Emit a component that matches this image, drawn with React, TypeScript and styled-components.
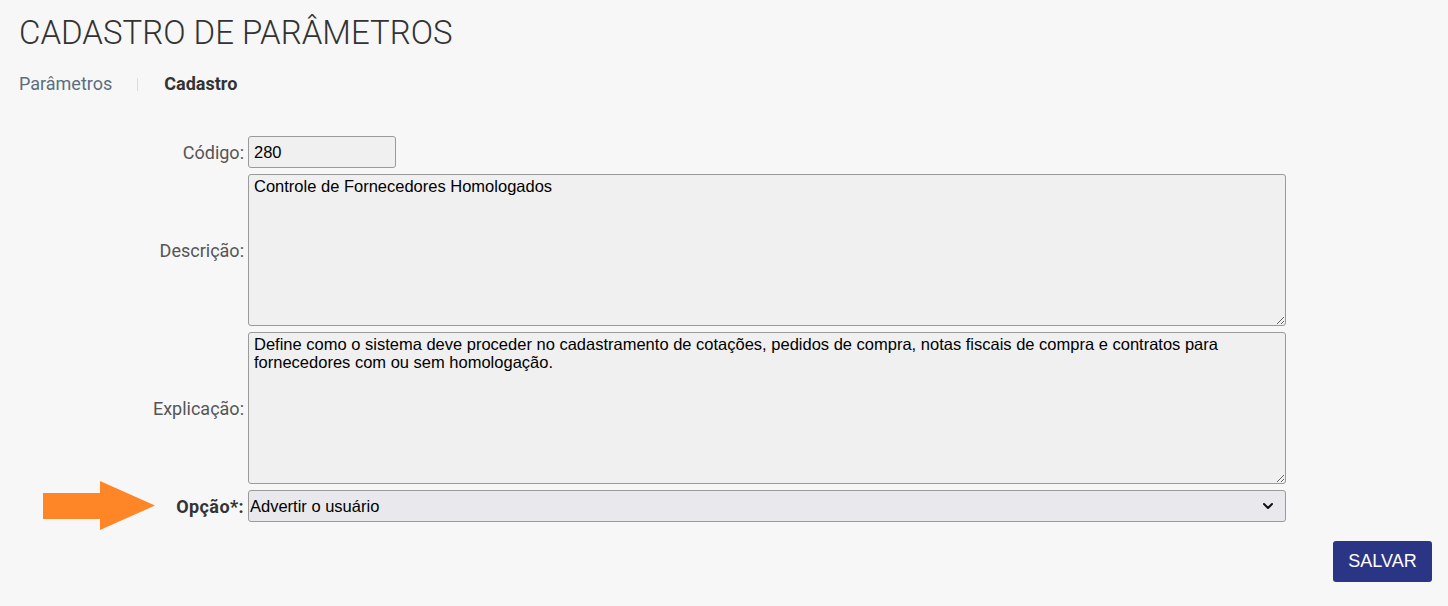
import React, { useState } from "react"
import styled, { createGlobalStyle } from "styled-components"
import { ChevronDown } from "lucide-react"

const GlobalStyle = createGlobalStyle`
  html, body {
    margin: 0;
    padding: 0;
    background: #f7f7f7;
  }
  body {
    font-family: Roboto, "Liberation Sans", Arial, sans-serif;
    color: #333;
  }
`

const Page = styled.div`
  padding: 14px 16px 0 19px;
  min-height: 606px;
  box-sizing: border-box;
`

const Title = styled.h1`
  margin: 0;
  font-family: Roboto, sans-serif;
  font-weight: 300;
  font-size: 33px;
  line-height: 38px;
  color: #333;
`

const Breadcrumb = styled.nav`
  display: flex;
  align-items: center;
  margin-top: 22px;
  font-size: 18px;
  line-height: 20px;
`

const Crumb = styled.span<{ $active?: boolean }>`
  color: ${(p) => (p.$active ? "#333" : "#5a6e80")};
  font-weight: ${(p) => (p.$active ? 700 : 400)};
`

const Sep = styled.span`
  width: 1px;
  height: 13px;
  background: #dcdcdc;
  margin: 0 26px 0 25px;
`

const Form = styled.div`
  display: grid;
  grid-template-columns: 225px 1038px;
  column-gap: 4px;
  row-gap: 6px;
  margin-top: 42px;
  align-items: center;
`

const Label = styled.label<{ $bold?: boolean }>`
  display: flex;
  align-items: center;
  justify-content: flex-end;
  gap: 21px;
  height: 32px;
  font-size: 18px;
  color: ${(p) => (p.$bold ? "#333" : "#555")};
  font-weight: ${(p) => (p.$bold ? 700 : 400)};
  letter-spacing: ${(p) => (p.$bold ? "0.4px" : "0")};
  white-space: nowrap;
`

const fieldBase = `
  box-sizing: border-box;
  font-family: "Liberation Sans", Arial, sans-serif;
  font-size: 16.5px;
  color: #000;
  background: #f0f0f0;
  border: 1px solid #9a9a9a;
  border-radius: 3px;
  outline: 0;
`

const TextInput = styled.input`
  ${fieldBase}
  width: 148px;
  height: 32px;
  padding: 0 5px;
`

const TextArea = styled.textarea`
  ${fieldBase}
  display: block;
  width: 1038px;
  height: 152px;
  padding: 2px 5px;
  line-height: 18px;
  resize: both;
`

const SelectWrap = styled.div`
  position: relative;
  width: 1038px;
  height: 32px;
`

const Select = styled.select`
  ${fieldBase}
  appearance: none;
  width: 100%;
  height: 32px;
  padding: 0 30px 0 1px;
  background-color: #e9e9ed;
`

const SelectIcon = styled(ChevronDown)`
  position: absolute;
  right: 10px;
  top: 8px;
  pointer-events: none;
  color: #111;
`

const ArrowSvg = styled.svg`
  margin: -9px 0;
  flex-shrink: 0;
`

const Actions = styled.div`
  display: flex;
  justify-content: flex-end;
  margin-top: 19px;
`

const SaveButton = styled.button`
  width: 99px;
  height: 41px;
  border: 0;
  border-radius: 3px;
  background: #2b3585;
  color: #fff;
  font-family: "Liberation Sans", Arial, sans-serif;
  font-size: 18px;
  cursor: pointer;
`

function PointerArrow() {
  return (
    <ArrowSvg width="112" height="50" viewBox="0 0 112 50">
      <polygon
        points="0,12 57,12 57,0 112,24.5 57,49 57,38 0,38"
        fill="#ff8626"
      />
    </ArrowSvg>
  )
}

function App() {
  const [codigo, setCodigo] = useState("280")
  const [descricao, setDescricao] = useState(
    "Controle de Fornecedores Homologados"
  )
  const [explicacao, setExplicacao] = useState(
    "Define como o sistema deve proceder no cadastramento de cotações, pedidos de compra, notas fiscais de compra e contratos para fornecedores com ou sem homologação."
  )
  const [opcao, setOpcao] = useState("advertir")

  return (
    <>
      <GlobalStyle />
      <Page>
        <Title>CADASTRO DE PARÂMETROS</Title>
        <Breadcrumb>
          <Crumb>Parâmetros</Crumb>
          <Sep />
          <Crumb $active>Cadastro</Crumb>
        </Breadcrumb>
        <Form>
          <Label>Código:</Label>
          <TextInput value={codigo} onChange={(e) => setCodigo(e.target.value)} />
          <Label>Descrição:</Label>
          <TextArea
            value={descricao}
            onChange={(e) => setDescricao(e.target.value)}
          />
          <Label>Explicação:</Label>
          <TextArea
            value={explicacao}
            onChange={(e) => setExplicacao(e.target.value)}
          />
          <Label $bold>
            <PointerArrow />
            Opção*:
          </Label>
          <SelectWrap>
            <Select value={opcao} onChange={(e) => setOpcao(e.target.value)}>
              <option value="advertir">Advertir o usuário</option>
              <option value="bloquear">Bloquear o cadastro</option>
              <option value="nada">Não fazer nada</option>
            </Select>
            <SelectIcon size={16} strokeWidth={3} />
          </SelectWrap>
        </Form>
        <Actions>
          <SaveButton>SALVAR</SaveButton>
        </Actions>
      </Page>
    </>
  )
}

export default App
